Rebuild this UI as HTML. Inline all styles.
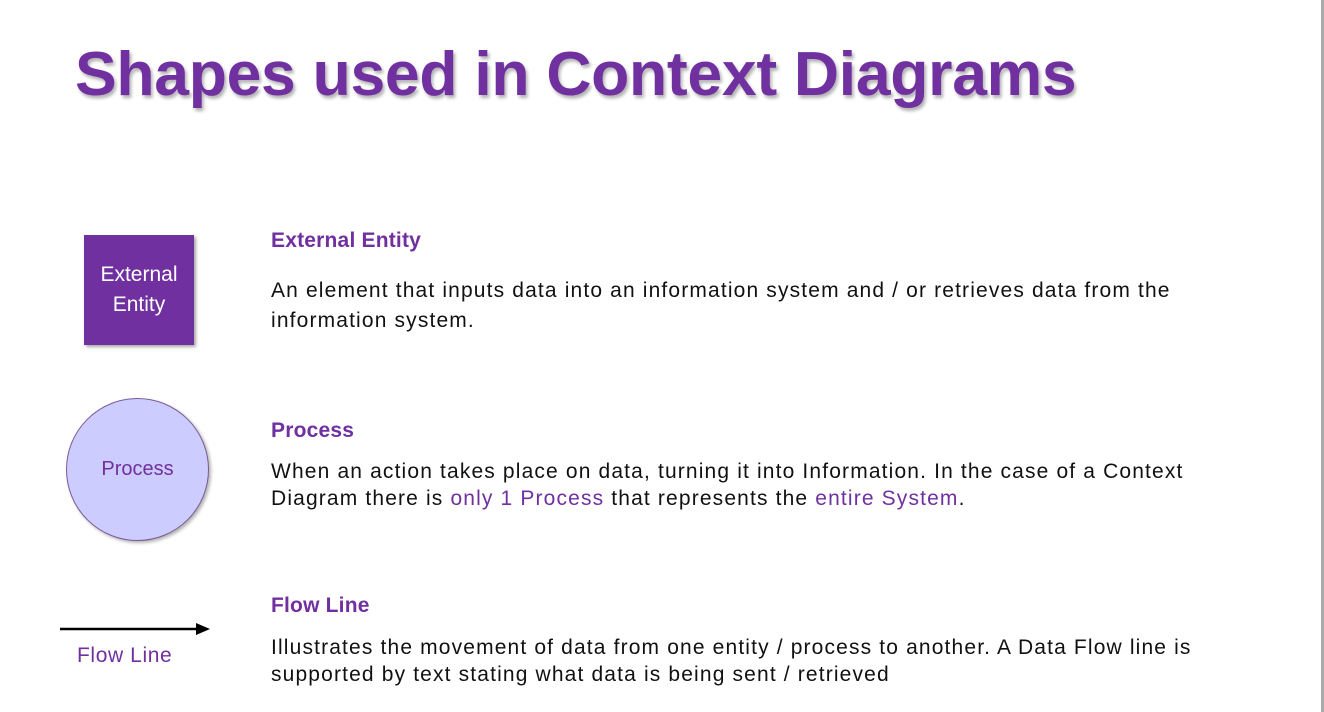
<!DOCTYPE html>
<html><head><meta charset="utf-8"><style>
body{margin:0;width:1324px;height:712px;background:#fff;position:relative;overflow:hidden;font-family:"Liberation Sans",sans-serif}
.a{position:absolute;white-space:nowrap}
.t{left:75px;top:38px;font-size:62.5px;font-weight:bold;color:#7030a0;text-shadow:2px 3px 3px rgba(0,0,0,.3);letter-spacing:-0.3px}
.h{font-size:21px;font-weight:bold;color:#7030a0;left:271px;letter-spacing:0.2px}
.b{font-size:21px;color:#111;left:271px;line-height:28px;letter-spacing:1.15px}
.p{color:#7030a0}
</style></head><body>
<div style="position:absolute;right:0;top:0;width:3px;height:712px;background:#aaa"></div>
<div class="a t">Shapes used in Context Diagrams</div>

<div class="a" style="left:84px;top:235px;width:110px;height:110px;background:#7030a0;box-shadow:2px 2px 3px rgba(0,0,0,.35);color:#fff;font-size:21px;text-align:center;line-height:30px;display:flex;align-items:center;justify-content:center;white-space:normal">External<br>Entity</div>
<div class="a h" style="top:229px">External Entity</div>
<div class="a b" style="top:276px;line-height:30px">An element that inputs data into an information system and / or retrieves data from the<br>information system.</div>

<div class="a" style="left:66px;top:398px;width:141px;height:141px;border-radius:50%;background:#ccccff;border:1px solid #7a5a9a;box-shadow:2px 2px 3px rgba(0,0,0,.3);color:#7030a0;font-size:20px;display:flex;align-items:center;justify-content:center">Process</div>
<div class="a h" style="top:419px">Process</div>
<div class="a b" style="top:458px;line-height:27px">When an action takes place on data, turning it into Information. In the case of a Context<br>Diagram there is <span class="p">only 1 Process</span> that represents the <span class="p">entire System</span>.</div>

<svg class="a" style="left:60px;top:620px" width="152" height="18"><line x1="0" y1="9" x2="138" y2="9" stroke="#000" stroke-width="2.5"/><polygon points="136,3 150,9 136,15" fill="#000"/></svg>
<div class="a" style="left:77px;top:644px;font-size:21px;letter-spacing:0.6px;color:#7030a0">Flow Line</div>
<div class="a h" style="top:594px">Flow Line</div>
<div class="a b" style="top:634px;line-height:27px">Illustrates the movement of data from one entity / process to another. A Data Flow line is<br>supported by text stating what data is being sent / retrieved</div>
</body></html>
